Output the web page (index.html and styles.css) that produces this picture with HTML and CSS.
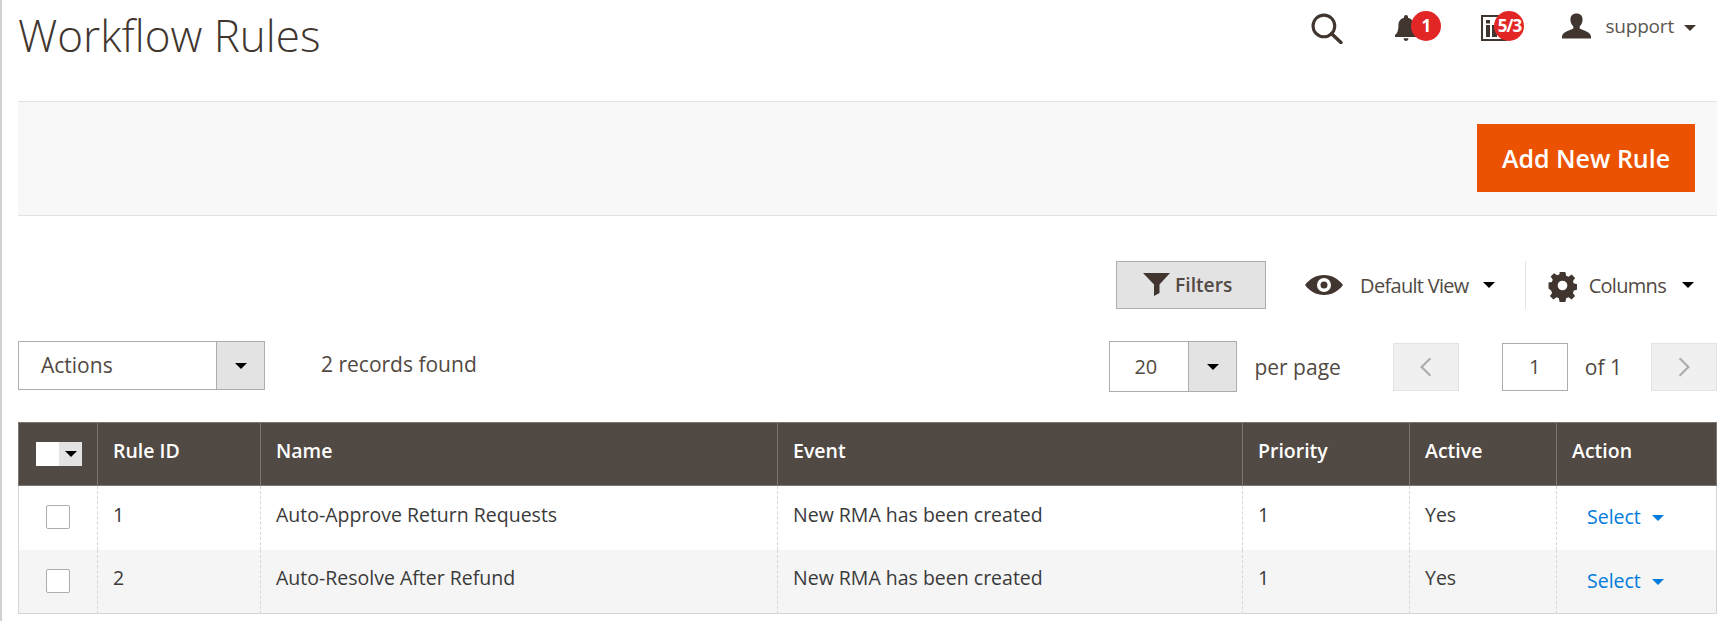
FILE: index.html
```html
<!DOCTYPE html>
<html lang="en">
<head>
<meta charset="utf-8">
<title>Workflow Rules</title>
<link rel="stylesheet" href="styles.css">
</head>
<body>
<div class="page">
  <header class="top">
    <h1 class="title">Workflow Rules</h1>
    <div class="top-tools">
      <svg class="ic-search" viewBox="0 0 31 30"><circle cx="12.500" cy="12.500" r="10.500" fill="none" stroke="#41362f" stroke-width="3"/><path d="M20 20L29 28.500" stroke="#41362f" stroke-width="3.400" stroke-linecap="round"/></svg>
      <div class="notice bell-wrap">
        <svg class="ic-bell" viewBox="0 0 26 26"><path fill="#41362f" d="M13 0c1.200 0 2 .8 2 2v.8c3.600 1 5.600 3.900 5.600 7.600 0 5 1 7.600 3.400 9.600v2H2v-2c2.400-2 3.400-4.600 3.400-9.600 0-3.700 2-6.600 5.600-7.600V2c0-1.200.8-2 2-2z"/><path fill="#41362f" d="M10.500 23.300h5c0 1.500-1.100 2.700-2.500 2.700s-2.500-1.200-2.500-2.700z"/></svg>
        <span class="badge">1</span>
      </div>
      <div class="notice inbox-wrap">
        <svg class="ic-inbox" viewBox="0 0 26 26"><rect x="1" y="1" width="24" height="24" fill="#fff" stroke="#41362f" stroke-width="2"/><rect x="5" y="5" width="4" height="3.500" fill="#41362f"/><rect x="5" y="10" width="4" height="12" fill="#41362f"/><path fill="#41362f" d="M11 10h11v12h-3V13h-3v9h-5z"/></svg>
        <span class="badge badge-wide">5/3</span>
      </div>
      <div class="user">
        <svg class="ic-user" viewBox="0 0 30 26"><path fill="#41362f" d="M15 0c4.200 0 6.300 2.600 6.300 6.300 0 2.900-1.200 5.700-3 7.100v2.300c1.500 1.500 10.800 2.800 11.700 7.800V26H0v-2.500c.9-5 10.200-6.300 11.700-7.800v-2.300c-1.800-1.400-3-4.200-3-7.100C8.700 2.600 10.800 0 15 0z"/></svg>
        <span class="user-name">support</span>
        <span class="caret caret-dark"></span>
      </div>
    </div>
  </header>

  <div class="actions-bar">
    <button class="primary">Add New Rule</button>
  </div>

  <div class="controls">
    <button class="filters">
      <svg class="ic-funnel" viewBox="0 0 27 23"><path fill="#41362f" d="M0 0h27L16.500 11.500V20L11 23V11.500z"/></svg>
      <span>Filters</span>
    </button>
    <div class="view">
      <svg class="ic-eye" viewBox="0 0 38 20"><path fill="#41362f" fill-rule="evenodd" d="M19 0c8 0 14.500 4 19 10-4.500 6-11 10-19 10S4.500 16 0 10C4.500 4 11 0 19 0zm0 3a7 7 0 1 0 0 14 7 7 0 0 0 0-14zm0 3.500a3.500 3.500 0 1 1 0 7 3.500 3.500 0 0 1 0-7z"/></svg>
      <span class="view-label">Default View</span>
      <span class="caret caret-black"></span>
    </div>
    <div class="cols">
      <svg class="ic-gear" viewBox="0 0 28 28"><path fill="#41362f" fill-rule="evenodd" d="M11 0h6l.8 3.900 2.400 1 3.300-2.200 3.500 3.500-2.200 3.300 1 2.400 3.200.6v6l-3.200.8-1 2.400 2.200 3.300-3.500 3.500-3.300-2.200-2.400 1-.8 3.900h-6l-.8-3.900-2.400-1-3.300 2.200-3.500-3.500 2.200-3.300-1-2.400L-.5 17v-6l3.400-.6 1-2.400-2.200-3.300 3.500-3.500 3.300 2.200 2.400-1zM14 9a5 5 0 1 0 0 10 5 5 0 0 0 0-10z"/></svg>
      <span class="view-label cols-label">Columns</span>
      <span class="caret caret-black"></span>
    </div>
  </div>

  <div class="pager-row">
    <div class="select-box actions-select">
      <span class="select-value">Actions</span>
      <span class="select-btn"><span class="caret caret-black"></span></span>
    </div>
    <span class="records">2 records found</span>
    <div class="pager">
      <div class="select-box size-select">
        <span class="select-value">20</span>
        <span class="select-btn"><span class="caret caret-black"></span></span>
      </div>
      <span class="per-page">per page</span>
      <span class="page-btn prev"><svg viewBox="0 0 12 20"><path d="M10 2L2 10l8 8" fill="none" stroke="#adadad" stroke-width="2"/></svg></span>
      <span class="page-input">1</span>
      <span class="of">of 1</span>
      <span class="page-btn"><svg viewBox="0 0 12 20"><path d="M2 2l8 8-8 8" fill="none" stroke="#adadad" stroke-width="2"/></svg></span>
    </div>
  </div>

  <table class="grid">
    <thead>
      <tr>
        <th class="c-check"><span class="head-check"><span class="head-box"></span><span class="head-btn"><span class="caret caret-black"></span></span></span></th>
        <th class="c-id">Rule ID</th>
        <th class="c-name">Name</th>
        <th class="c-event">Event</th>
        <th class="c-priority">Priority</th>
        <th class="c-active">Active</th>
        <th class="c-action">Action</th>
      </tr>
    </thead>
    <tbody>
      <tr>
        <td class="cell-check"><span class="check"></span></td>
        <td>1</td>
        <td>Auto-Approve Return Requests</td>
        <td>New RMA has been created</td>
        <td>1</td>
        <td>Yes</td>
        <td class="cell-action"><a class="select-link">Select<span class="caret caret-blue"></span></a></td>
      </tr>
      <tr class="even">
        <td class="cell-check"><span class="check"></span></td>
        <td>2</td>
        <td>Auto-Resolve After Refund</td>
        <td>New RMA has been created</td>
        <td>1</td>
        <td>Yes</td>
        <td class="cell-action"><a class="select-link">Select<span class="caret caret-blue"></span></a></td>
      </tr>
    </tbody>
  </table>
</div>
</body>
</html>
```
FILE: styles.css
```css
* { box-sizing: border-box; }
html, body { margin: 0; padding: 0; background: #fff; }
body { font-family: "Open Sans", sans-serif; color: #41362f; overflow: hidden; }
.page { width: 1732px; height: 621px; border-left: 2px solid #d0d0d0; padding: 0 15px 0 16px; overflow: hidden; }

.top { height: 101px; display: flex; justify-content: space-between; align-items: flex-start; }
.title { margin: 10px 0 0; font-size: 44px; line-height: 50px; font-weight: 300; color: #41362f; }
.top-tools { display: flex; align-items: center; height: 56px; padding-right: 21px; }
.ic-search { width: 32px; height: 31px; margin-right: 50px; }
.notice { position: relative; }
.bell-wrap { width: 26px; height: 26px; margin-right: 62px; }
.ic-bell { width: 26px; height: 26px; display: block; }
.inbox-wrap { width: 26px; height: 26px; margin-right: 55px; }
.ic-inbox { width: 26px; height: 26px; display: block; }
.badge { position: absolute; left: 18px; top: -4px; width: 30px; height: 30px; border-radius: 50%; background: #e22626; color: #fff; font-size: 17px; font-weight: 700; line-height: 30px; text-align: center; }
.badge-wide { left: 13px; letter-spacing: -1px; }
.user { display: flex; align-items: center; }
.ic-user { width: 29px; height: 26px; margin: 0 14px 4px 0; }
.user-name { font-size: 19px; letter-spacing: -.2px; color: #5c5651; margin-bottom: 4px; }
.caret { display: inline-block; width: 0; height: 0; border-style: solid; border-width: 6px 6px 0; border-color: #000 transparent transparent; }
.caret-dark { border-top-color: #41362f; margin-left: 10px; }
.caret-black { border-top-color: #000; }
.caret-blue { border-top-color: #007bdb; margin-left: 11px; vertical-align: 3px; }

.actions-bar { height: 115px; background: #f8f8f8; border-top: 1px solid #e3e3e3; border-bottom: 1px solid #e3e3e3; display: flex; justify-content: flex-end; align-items: flex-start; padding: 22px 22px 0 0; }
.primary { width: 218px; height: 68px; background: #eb5202; color: #fff; border: 0; font-family: inherit; font-size: 25px; font-weight: 600; }

.controls { display: flex; justify-content: flex-end; align-items: stretch; height: 48px; margin-top: 45px; padding-right: 23px; }
.filters { width: 150px; background: #e3e3e3; border: 1px solid #adadad; font-family: inherit; font-size: 19.200px; font-weight: 600; color: #514943; display: flex; align-items: center; justify-content: flex-start; gap: 5px; padding: 0 0 2px 26px; }
.ic-funnel { width: 27px; height: 23px; }
.view { display: flex; align-items: center; margin-left: 39px; padding-right: 30px; border-right: 1px solid #e3e3e3; }
.ic-eye { width: 38px; height: 20px; margin-right: 17px; }
.ic-gear { width: 27px; height: 27px; margin-right: 13px; overflow: visible; }
.view-label { font-size: 20px; color: #514943; letter-spacing: -.7px; margin-right: 14px; }
.cols-label { margin-right: 16px; }
.cols { display: flex; align-items: center; margin-left: 23px; }

.pager-row { display: flex; align-items: flex-start; margin-top: 32px; height: 51px; }
.select-box { display: flex; border: 1px solid #adadad; background: #fff; }
.actions-select { width: 247px; height: 49px; }
.size-select { width: 128px; height: 51px; }
.select-value { flex: 1; font-size: 21px; color: #514943; padding-left: 22px; line-height: 47px; }
.size-select .select-value { font-size: 20px; padding-left: 24px; line-height: 49px; }
.select-btn { width: 48px; background: #e3e3e3; border-left: 1px solid #adadad; display: flex; align-items: center; justify-content: center; }
.records { margin-left: 56px; font-size: 21px; line-height: 47px; color: #514943; }
.pager { margin-left: auto; display: flex; align-items: center; height: 51px; }
.per-page { font-size: 21px; color: #514943; margin: 0 52px 0 17px; }
.page-btn { width: 66px; height: 48px; background: #f0f0f0; border: 1px solid #e3e3e3; display: flex; align-items: center; justify-content: center; }
.page-btn svg { width: 14px; height: 22px; }
.page-input { width: 66px; height: 48px; margin-left: 43px; border: 1px solid #adadad; font-size: 20px; color: #514943; text-align: center; line-height: 46px; }
.of { font-size: 21px; color: #514943; margin: 0 29px 0 17px; }

.grid { width: 1699px; margin-top: 30px; border-collapse: separate; border-spacing: 0; table-layout: fixed; }
.grid th { height: 64px; background: #514943; color: #fff; font-size: 19.500px; font-weight: 600; text-align: left; padding: 0 0 8px 15px; border-left: 1px solid #7d7570; border-top: 1px solid #7d7570; border-bottom: 1px solid #7d7570; }
.grid th:last-child { border-right: 1px solid #7d7570; }
.grid td { height: 64px; font-size: 19.500px; color: #3a3a3a; padding: 0 0 8px 15px; border-left: 1px dashed #d6d6d6; }
.grid tbody tr:last-child td { border-bottom: 1px solid #d6d6d6; }
.grid td:first-child { border-left: 1px solid #d6d6d6; }
.grid td:last-child { border-right: 1px solid #d6d6d6; }
.even td { background: #f5f5f5; }
.c-check { width: 79px; }
.c-id { width: 163px; }
.c-name { width: 517px; }
.c-event { width: 465px; }
.c-priority { width: 167px; }
.c-active { width: 147px; }
.grid th.c-check { padding: 0 0 0 17px; }
.head-check { display: flex; width: 46px; height: 24px; }
.head-box { width: 23px; background: #fff; }
.head-btn { flex: 1; background: #e3e3e3; display: flex; align-items: center; justify-content: center; }
.grid td.cell-check { padding: 0 0 2px 27px; }
.check { display: block; width: 24px; height: 24px; background: #fff; border: 1px solid #adadad; border-radius: 2px; }
.grid td.cell-action { padding: 0 0 3px 30px; }
.select-link { color: #007bdb; }
```
